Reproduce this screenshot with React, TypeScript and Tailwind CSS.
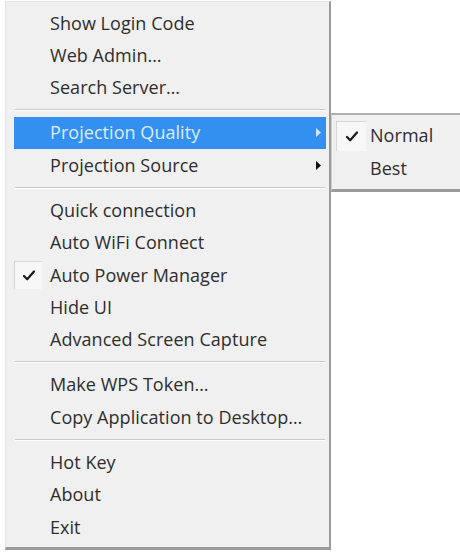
import React from "react";

type Item = { label: string; sep?: false; checked?: boolean; active?: boolean; sub?: boolean } | { sep: true };

const items: Item[] = [
  { label: "Show Login Code" },
  { label: "Web Admin…" },
  { label: "Search Server…" },
  { sep: true },
  { label: "Projection Quality", active: true, sub: true },
  { label: "Projection Source", sub: true },
  { sep: true },
  { label: "Quick connection" },
  { label: "Auto WiFi Connect" },
  { label: "Auto Power Manager", checked: true },
  { label: "Hide UI" },
  { label: "Advanced Screen Capture" },
  { sep: true },
  { label: "Make WPS Token…" },
  { label: "Copy Application to Desktop…" },
  { sep: true },
  { label: "Hot Key" },
  { label: "About" },
  { label: "Exit" },
];

function Check() {
  return (
    <svg width="12" height="11" viewBox="0 0 12 11">
      <path d="M1 6 L4.2 9.3 L11 1.5" fill="none" stroke="#1a1a1a" strokeWidth="2.2" strokeLinecap="round" strokeLinejoin="round" />
    </svg>
  );
}

function Arrow({ color }: { color: string }) {
  return (
    <svg width="5" height="9" viewBox="0 0 5 9">
      <path d="M0 0 L5 4.5 L0 9 Z" fill={color} />
    </svg>
  );
}

export default function App() {
  return (
    <div
      className="relative w-[460px] h-[554px] bg-white overflow-hidden"
      style={{ fontFamily: '"Open Sans", "Noto Sans", sans-serif' }}
    >
      <div className="ml-[5px] mt-[1px] w-[326px] bg-[#f0f0f0] border border-[#e4e4e4] border-r-[2px] border-r-[#9a9a9a] border-b-[3px] border-b-[#9a9a9a] pt-[5px] pb-[4px] pl-[8px] pr-[3px] text-[18px] tracking-[0.05px] text-[#2e2e2e]">
        {items.map((it, i) =>
          it.sep ? (
            <div key={i} className="h-[12.6px] flex flex-col justify-center pl-[1px] pr-[1px]">
              <div className="h-px bg-[#c8c8c8]" />
              <div className="h-px bg-white" />
            </div>
          ) : (
            <div
              key={i}
              className={`h-[32.4px] flex items-center relative ${it.active ? "bg-[#3390f0] text-[#dcecff]" : ""}`}
            >
              <div className="w-[36px] h-full flex items-center justify-center">
                {it.checked ? (
                  <div className="w-[28px] h-[28px] flex items-center justify-center bg-[#f7f7f7] border-l border-t border-[#d6d6d6] -ml-[8px]">
                    <Check />
                  </div>
                ) : null}
              </div>
              <span className="whitespace-nowrap">{it.label}</span>
              {it.sub ? (
                <div className="absolute right-[5px] top-0 h-full flex items-center">
                  <Arrow color={it.active ? "#cfe6ff" : "#111"} />
                </div>
              ) : null}
            </div>
          )
        )}
      </div>

      <div className="absolute left-[331px] top-[113px] w-[140px] bg-[#f0f0f0] border-t-[2px] border-t-[#b0b0b0] border-l border-l-[#d0d0d0] border-b-[3px] border-b-[#9a9a9a] pt-[4px] pb-[4px] text-[18px] tracking-[0.05px] text-[#2e2e2e]">
        <div className="h-[33px] flex items-center">
          <div className="w-[38px] flex items-center justify-center">
            <div className="w-[30px] h-[30px] flex items-center justify-center bg-[#f7f7f7] border-l border-t border-[#d6d6d6]">
              <Check />
            </div>
          </div>
          <span>Normal</span>
        </div>
        <div className="h-[33px] flex items-center">
          <div className="w-[38px]" />
          <span>Best</span>
        </div>
      </div>
    </div>
  );
}
